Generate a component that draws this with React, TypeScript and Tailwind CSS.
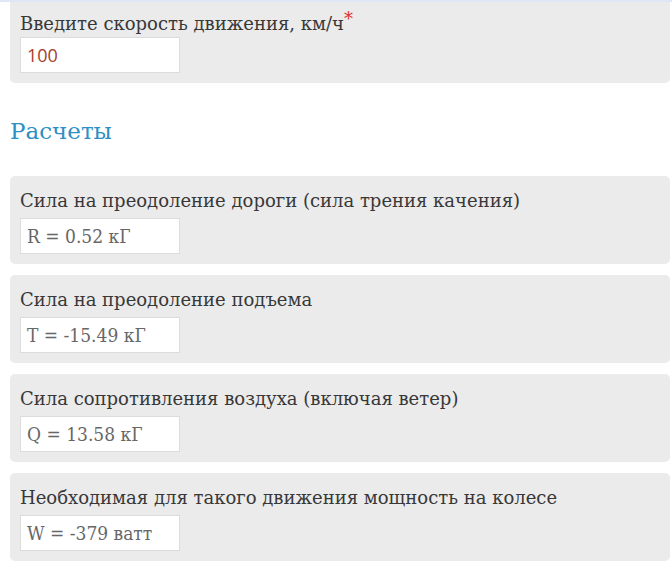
const results = [
  { label: "Сила на преодоление дороги (сила трения качения)", value: "R = 0.52 кГ" },
  { label: "Сила на преодоление подъема", value: "T = -15.49 кГ" },
  { label: "Сила сопротивления воздуха (включая ветер)", value: "Q = 13.58 кГ" },
  { label: "Необходимая для такого движения мощность на колесе", value: "W = -379 ватт" },
];

function Field({ label, value }: { label: string; value: string }) {
  return (
    <div className="bg-[#ebebeb] rounded-[5px] px-[10px] pt-[12px] pb-[10px]">
      <div className="text-[18px] leading-[26px] text-[#383838]">{label}</div>
      <div className="mt-[4px] w-[160px] h-[36px] bg-white border border-[#dcdcdc] px-[6px] flex items-center text-[19px] text-[#676767] font-['DejaVu_Serif_Condensed',serif]">
        {value}
      </div>
    </div>
  );
}

export default function App() {
  return (
    <div className="w-[672px] h-[564px] bg-white overflow-hidden font-['DejaVu_Serif',serif]">
      <div className="h-[2px] bg-[#dfe9f5]" />
      <div className="ml-[10px] mr-[2px] bg-[#ebebeb] rounded-b-[5px] px-[10px] pt-[9px] pb-[10px]">
        <div className="text-[18px] leading-[26px] text-[#383838]">
          Введите скорость движения, км/ч<span className="text-[#e0312f] relative -top-[5px]">*</span>
        </div>
        <div className="w-[160px] h-[36px] bg-white border border-[#dcdcdc] px-[6px] flex items-center text-[18px] text-[#a5402c] font-['Open_Sans',sans-serif]">
          100
        </div>
      </div>
      <h2 className="mt-[30px] ml-[10px] text-[23px] leading-[36px] text-[#2e8fc4]">Расчеты</h2>
      <div className="mt-[27px] ml-[10px] mr-[2px] flex flex-col gap-[11px]">
        {results.map((r) => (
          <Field key={r.label} label={r.label} value={r.value} />
        ))}
      </div>
    </div>
  );
}
